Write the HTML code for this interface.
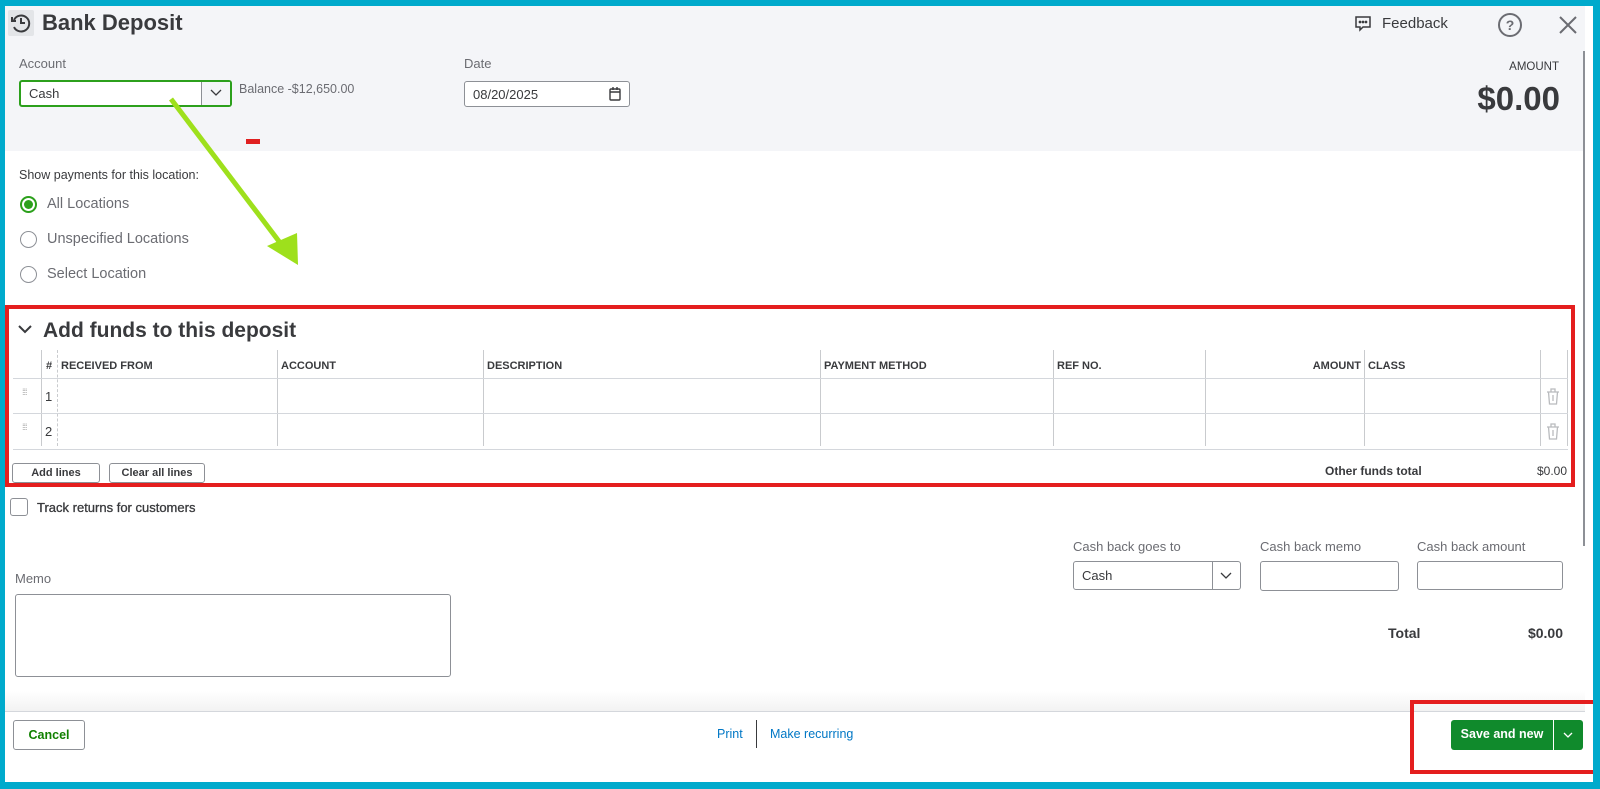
<!DOCTYPE html>
<html><head><meta charset="utf-8"><style>
*{box-sizing:border-box;margin:0;padding:0}
body{width:1600px;height:789px;overflow:hidden;background:#00aacc;font-family:"Liberation Sans",sans-serif;color:#393a3d;position:relative}
.a{position:absolute}
#page{position:absolute;left:5px;top:6px;width:1588px;height:776px;background:#fff;overflow:hidden}
.hdr{position:absolute;left:0;top:0;width:1580px;height:145px;background:#f4f5f8}
.lbl{font-size:13px;color:#6b6c72}
.inp{position:absolute;border:1px solid #8d9096;border-radius:3px;background:#fff;font-size:13px;padding-left:8px;display:flex;align-items:center}
.th{position:absolute;top:354px;font-size:11px;font-weight:bold;color:#393a3d}
.vl{position:absolute;width:0;border-left:1px dashed #c9cbce}
.hl{position:absolute;height:1px;background:#d4d7dc}
.btn{position:absolute;border:1px solid #8d9096;border-radius:3px;background:#fff;font-size:11px;font-weight:bold;display:flex;align-items:center;justify-content:center}
.radio{position:absolute;width:17px;height:17px;border:1px solid #8d9096;border-radius:50%;background:#fff}
</style></head><body>
<div id="page">
<div class="hdr"></div>
<div class="a" style="left:3px;top:4px;width:26px;height:26px;background:#e3e5e8;border-radius:2px"></div>
<svg class="a" style="left:5px;top:6px" width="22" height="22" viewBox="0 0 22 22" fill="none" stroke="#393a3d" stroke-width="2"><path d="M4 8A8 8 0 1 1 4 15"/><path d="M2 5v4h4"/><path d="M11 6v5h4"/></svg>
<div class="a" style="left:37px;top:4px;font-size:22px;font-weight:bold;color:#393a3d">Bank Deposit</div>
<svg class="a" style="left:1349px;top:9px" width="18" height="18" viewBox="0 0 18 18" fill="none" stroke="#393a3d" stroke-width="1.5"><path d="M2 2h14v10h-7l-3 3v-3H2z"/><circle cx="6" cy="7" r=".6" fill="#393a3d"/><circle cx="9" cy="7" r=".6" fill="#393a3d"/><circle cx="12" cy="7" r=".6" fill="#393a3d"/></svg>
<div class="a" style="left:1377px;top:9px;font-size:15px">Feedback</div>
<div class="a" style="left:1493px;top:7px;width:24px;height:24px;border:2px solid #6b6c72;border-radius:50%;font-size:14px;font-weight:bold;text-align:center;line-height:20px;color:#6b6c72">?</div>
<svg class="a" style="left:1554px;top:10px" width="18" height="18" viewBox="0 0 18 18" stroke="#6b6c72" stroke-width="2"><path d="M1 1l16 16M17 1L1 17"/></svg>
<div class="a lbl" style="left:14px;top:50px">Account</div>
<div class="inp" style="left:14px;top:74px;width:213px;height:27px;border:2px solid #2ca01c">Cash
 <div class="a" style="right:0;top:0;width:29px;height:23px;border-left:1px solid #8d9096;background:#f4f5f8"></div>
 <svg class="a" style="right:8px;top:7px" width="12" height="8" viewBox="0 0 12 8" fill="none" stroke="#393a3d" stroke-width="1.3"><path d="M1 1l5 5 5-5"/></svg></div>
<div class="a" style="left:234px;top:76px;font-size:12.5px;color:#6b6c72">Balance -$12,650.00</div>
<div class="a lbl" style="left:459px;top:50px">Date</div>
<div class="inp" style="left:459px;top:75px;width:166px;height:26px">08/20/2025
 <svg class="a" style="right:8px;top:5px" width="12" height="14" viewBox="0 0 12 14" fill="none" stroke="#393a3d" stroke-width="1.4"><rect x="1" y="2" width="10" height="11" rx="1"/><path d="M1 5h10M4 0v3M8 0v3"/></svg></div>
<div class="a" style="right:34px;top:55px;font-size:11.5px;color:#393a3d">AMOUNT</div>
<div class="a" style="right:33px;top:74px;font-size:33px;font-weight:bold;color:#393a3d">$0.00</div>
<div class="a" style="left:241px;top:133px;width:14px;height:5px;background:#e02020"></div>
<div class="a" style="left:1578px;top:45px;width:2px;height:495px;background:#8d9096"></div>
<div class="a" style="left:1581px;top:0;width:7px;height:776px;background:#fff"></div>

<div class="a" style="left:14px;top:162px;font-size:12.5px">Show payments for this location:</div>
<div class="radio" style="left:15px;top:190px;border:2px solid #2ca01c"><div style="margin:2px;width:9px;height:9px;border-radius:50%;background:#2ca01c"></div></div>
<div class="a" style="left:42px;top:190px;font-size:14.5px;color:#6b6c72">All Locations</div>
<div class="radio" style="left:15px;top:225px"></div>
<div class="a" style="left:42px;top:225px;font-size:14.5px;color:#6b6c72">Unspecified Locations</div>
<div class="radio" style="left:15px;top:260px"></div>
<div class="a" style="left:42px;top:260px;font-size:14.5px;color:#6b6c72">Select Location</div>

<svg class="a" style="left:12px;top:318px" width="16" height="12" viewBox="0 0 16 12" fill="none" stroke="#393a3d" stroke-width="2"><path d="M2 2l6 6 6-6"/></svg>
<div class="a" style="left:38px;top:313px;font-size:21px;font-weight:bold;color:#393a3d">Add funds to this deposit</div>
<div class="vl" style="left:36px;top:344px;height:96px;border-left-style:solid"></div>
<div class="vl" style="left:52px;top:344px;height:96px"></div>
<div class="vl" style="left:272px;top:344px;height:96px;border-left-style:solid"></div>
<div class="vl" style="left:478px;top:344px;height:96px;border-left-style:solid"></div>
<div class="vl" style="left:815px;top:344px;height:96px;border-left-style:solid"></div>
<div class="vl" style="left:1048px;top:344px;height:96px;border-left-style:solid"></div>
<div class="vl" style="left:1200px;top:344px;height:96px;border-left-style:solid"></div>
<div class="vl" style="left:1359px;top:344px;height:96px;border-left-style:solid"></div>
<div class="vl" style="left:1535px;top:344px;height:96px;border-left-style:solid"></div>
<div class="vl" style="left:1562px;top:344px;height:96px;border-left-style:solid"></div>
<div class="hl" style="left:8px;top:372px;width:1555px"></div>
<div class="hl" style="left:8px;top:407px;width:1555px"></div>
<div class="hl" style="left:8px;top:443px;width:1555px"></div>
<div class="th" style="left:41px">#</div>
<div class="th" style="left:56px">RECEIVED FROM</div>
<div class="th" style="left:276px">ACCOUNT</div>
<div class="th" style="left:482px">DESCRIPTION</div>
<div class="th" style="left:819px">PAYMENT METHOD</div>
<div class="th" style="left:1052px">REF NO.</div>
<div class="th" style="left:1300px;width:56px;text-align:right">AMOUNT</div>
<div class="th" style="left:1363px">CLASS</div>
<div class="a" style="left:17px;top:384px;font-size:9px;color:#aaa;letter-spacing:-1px;line-height:4px">⁞⁞⁞</div>
<div class="a" style="left:17px;top:419px;font-size:9px;color:#aaa;letter-spacing:-1px;line-height:4px">⁞⁞⁞</div>
<div class="a" style="left:40px;top:383px;font-size:13px">1</div>
<div class="a" style="left:40px;top:418px;font-size:13px">2</div>
<svg class="a" style="left:1541px;top:382px" width="14" height="17" viewBox="0 0 14 17" fill="none" stroke="#b9bbbe" stroke-width="1.3"><path d="M1 4h12M5 4V1h4v3M2.5 4l1 12h7l1-12M7 7v6"/></svg>
<svg class="a" style="left:1541px;top:417px" width="14" height="17" viewBox="0 0 14 17" fill="none" stroke="#b9bbbe" stroke-width="1.3"><path d="M1 4h12M5 4V1h4v3M2.5 4l1 12h7l1-12M7 7v6"/></svg>
<div class="btn" style="left:7px;top:457px;width:88px;height:20px">Add lines</div>
<div class="btn" style="left:104px;top:457px;width:96px;height:20px">Clear all lines</div>
<div class="a" style="left:1320px;top:458px;font-size:12px;font-weight:bold">Other funds total</div>
<div class="a" style="right:26px;top:458px;font-size:12px">$0.00</div>
<div class="a" style="left:0;top:299px;width:1570px;height:182px;border:4px solid #e41e1e"></div>

<div class="a" style="left:5px;top:492px;width:18px;height:18px;border:1px solid #8d9096;border-radius:3px"></div>
<div class="a" style="left:32px;top:494px;font-size:13px;color:#393a3d;-webkit-text-stroke:0.3px #393a3d">Track returns for customers</div>

<div class="a lbl" style="left:1068px;top:533px">Cash back goes to</div>
<div class="inp" style="left:1068px;top:555px;width:168px;height:29px">Cash
 <div class="a" style="right:0;top:0;width:28px;height:27px;border-left:1px solid #8d9096"></div>
 <svg class="a" style="right:8px;top:10px" width="12" height="8" viewBox="0 0 12 8" fill="none" stroke="#393a3d" stroke-width="1.3"><path d="M1 1l5 5 5-5"/></svg></div>
<div class="a lbl" style="left:1255px;top:533px">Cash back memo</div>
<div class="inp" style="left:1255px;top:555px;width:139px;height:30px"></div>
<div class="a lbl" style="left:1412px;top:533px">Cash back amount</div>
<div class="inp" style="left:1412px;top:555px;width:146px;height:29px"></div>
<div class="a" style="left:1383px;top:619px;font-size:14px;font-weight:bold">Total</div>
<div class="a" style="right:30px;top:619px;font-size:14px;font-weight:bold">$0.00</div>

<div class="a lbl" style="left:10px;top:565px">Memo</div>
<div class="inp" style="left:10px;top:588px;width:436px;height:83px"></div>

<div class="a" style="left:0;top:685px;width:1580px;height:20px;background:linear-gradient(#fff,#f2f2f2)"></div>
<div class="hl" style="left:0;top:705px;width:1580px;background:#d4d7dc"></div>
<div class="btn" style="left:8px;top:714px;width:72px;height:30px;color:#108000;font-size:12.5px">Cancel</div>
<div class="a" style="left:712px;top:721px;font-size:12.5px;color:#0077c5">Print</div>
<div class="a" style="left:751px;top:714px;width:1px;height:28px;background:#393a3d"></div>
<div class="a" style="left:765px;top:721px;font-size:12.5px;color:#0077c5">Make recurring</div>
<div class="a" style="left:1446px;top:714px;width:132px;height:30px;background:#108a2c;border-radius:3px"></div>
<div class="a" style="left:1446px;top:721px;width:102px;text-align:center;font-size:12.5px;font-weight:bold;color:#fff">Save and new</div>
<div class="a" style="left:1548px;top:714px;width:1px;height:30px;background:#fff"></div>
<svg class="a" style="left:1558px;top:726px" width="10" height="6" viewBox="0 0 10 6" fill="none" stroke="#fff" stroke-width="1.3"><path d="M1 1l4 4 4-4"/></svg>
<div class="a" style="left:1405px;top:694px;width:188px;height:74px;border:4px solid #e41e1e"></div>

<svg class="a" style="left:0;top:0" width="400" height="300"><path d="M166 93L276 238" stroke="#9ee01c" stroke-width="5"/><path d="M293 259L262 240L292 227Z" fill="#9ee01c"/></svg>
</div>
</body></html>
